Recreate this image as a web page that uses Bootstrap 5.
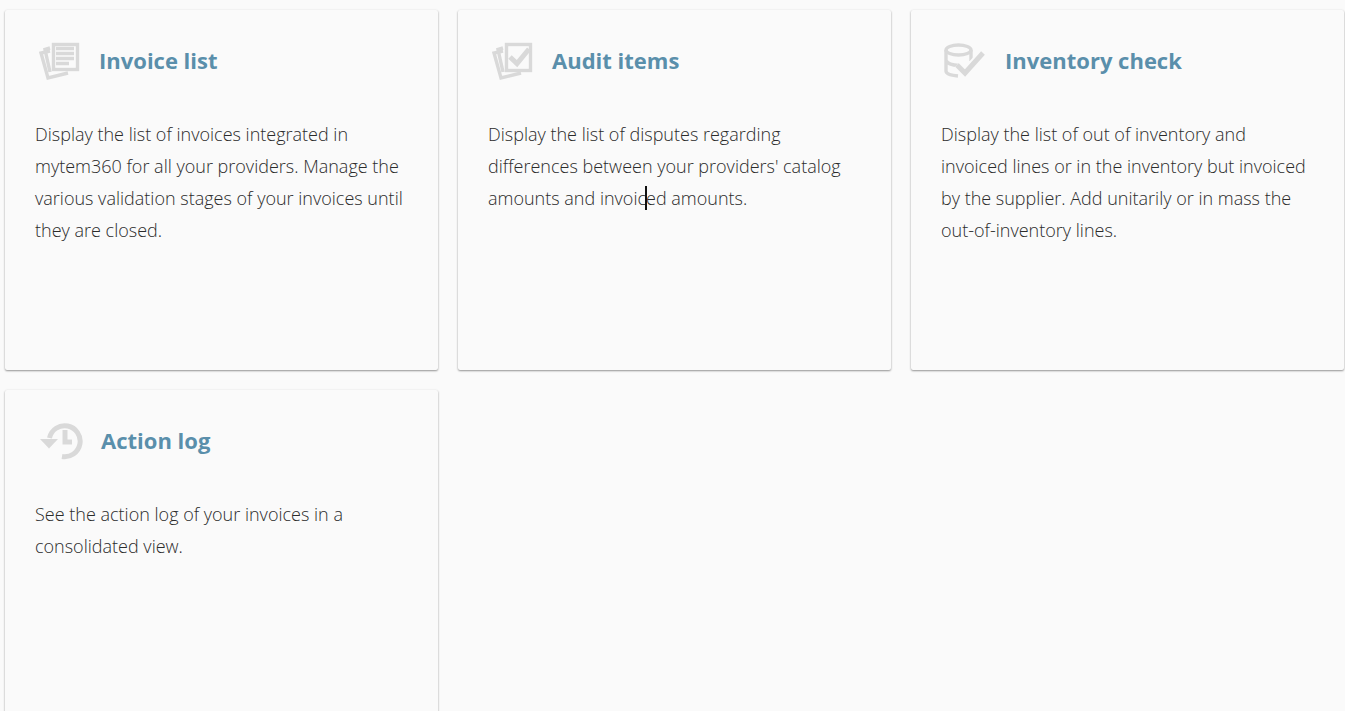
<!DOCTYPE html>
<html lang="en">
<head>
<meta charset="utf-8">
<title>Invoices</title>
<link href="https://cdn.jsdelivr.net/npm/bootstrap@5.3.0/dist/css/bootstrap.min.css" rel="stylesheet">
<style>
html, body { height: 100%; overflow: hidden; }
body { background: #fafafa; font-family: "Open Sans", "Liberation Sans", sans-serif; color: #2b2b2b; }
.tile-wrap { padding: 10px 1px 0 5px; }
.tile-row { --bs-gutter-x: 20px; --bs-gutter-y: 20px; }
.tile { height: 360px; background: #fafafa; border: 0; border-radius: 2px; box-shadow: 0 1px 2px rgba(0,0,0,.4), 0 0 3px rgba(0,0,0,.04); padding: 29px 30px 0; }
.tile-head { height: 44px; margin-bottom: 35px; padding-left: 2px; }
.tile-icon { width: 44px; height: 44px; margin-right: 18px; flex: none; }
.tile-icon-wide { width: 46px; }
.tile-title { font-size: 22px; font-weight: 700; color: #5a8fab; margin: -2px 0 0; line-height: 44px; }
.tile-text { font-size: 18px; font-weight: 300; line-height: 32px; margin: 0; color: #2b2b2b; }
.caret-anchor { position: relative; }
.caret-bar { position: absolute; left: -1px; top: 0; width: 2px; height: 24px; background: #111; }
.ic-line { fill: none; stroke: #d9d9d9; stroke-width: 3.4; }
.ic-thick { stroke-width: 5; }
.ic-halo { fill: none; stroke: #fafafa; stroke-width: 9; }
.ic-fill { fill: #d9d9d9; }
</style>
</head>
<body>
<div class="tile-wrap">
  <div class="row tile-row">
    <div class="col-4">
      <div class="card tile">
        <div class="d-flex align-items-center tile-head">
          <svg class="tile-icon" viewBox="0 0 44 44"><path class="ic-line" d="M13 12 L4 14 L11 39 L31 34"/><path class="ic-line" d="M13 9 L8 10.500 L13 33"/><rect class="ic-line" x="16.500" y="5.500" width="24" height="25"/><path class="ic-line" d="M19 9.500H37M19 14.500H37M19 19.500H37M19 24.500H32"/></svg>
          <h2 class="tile-title">Invoice list</h2>
        </div>
        <p class="tile-text">Display the list of invoices integrated in mytem360 for all your providers. Manage the various validation stages of your invoices until they are closed.</p>
      </div>
    </div>
    <div class="col-4">
      <div class="card tile">
        <div class="d-flex align-items-center tile-head">
          <svg class="tile-icon" viewBox="0 0 44 44"><path class="ic-line" d="M13 12 L4 14 L11 39 L31 34"/><path class="ic-line" d="M13 9 L8 10.500 L13 33"/><rect class="ic-line" x="16.500" y="5.500" width="24" height="26"/><path class="ic-line ic-thick" d="M20 18 L27 24.500 L39 10"/></svg>
          <h2 class="tile-title">Audit items</h2>
        </div>
        <p class="tile-text">Display the list of disputes regarding differences between your providers' catalog amounts and invoic<span class="caret-anchor"><span class="caret-bar"></span></span>ed amounts.</p>
      </div>
    </div>
    <div class="col-4">
      <div class="card tile">
        <div class="d-flex align-items-center tile-head">
          <svg class="tile-icon" viewBox="0 0 44 44"><ellipse class="ic-line" cx="15.500" cy="11" rx="12.500" ry="5"/><path class="ic-line" d="M3 11V32Q3 36 15 37M28 11V22M3 21.500Q5 26 16 26.500"/><path class="ic-halo" d="M14 26 L22 34 L40 14"/><path class="ic-line ic-thick" d="M14 26 L22 34 L40 14"/></svg>
          <h2 class="tile-title">Inventory check</h2>
        </div>
        <p class="tile-text">Display the list of out of inventory and invoiced lines or in the inventory but invoiced by the supplier. Add unitarily or in mass the out-of-inventory lines.</p>
      </div>
    </div>
    <div class="col-4">
      <div class="card tile">
        <div class="d-flex align-items-center tile-head">
          <svg class="tile-icon tile-icon-wide" viewBox="0 0 46 44"><path class="ic-line ic-thick" d="M12.500 19 A15.500 15.500 0 1 1 25 37.500"/><path class="ic-fill" d="M3 20H21L12 29.500Z"/><path class="ic-line ic-thick" d="M28 11V23H35"/></svg>
          <h2 class="tile-title">Action log</h2>
        </div>
        <p class="tile-text">See the action log of your invoices in a consolidated view.</p>
      </div>
    </div>
  </div>
</div>
<script src="https://cdn.jsdelivr.net/npm/bootstrap@5.3.0/dist/js/bootstrap.bundle.min.js"></script>
</body>
</html>
